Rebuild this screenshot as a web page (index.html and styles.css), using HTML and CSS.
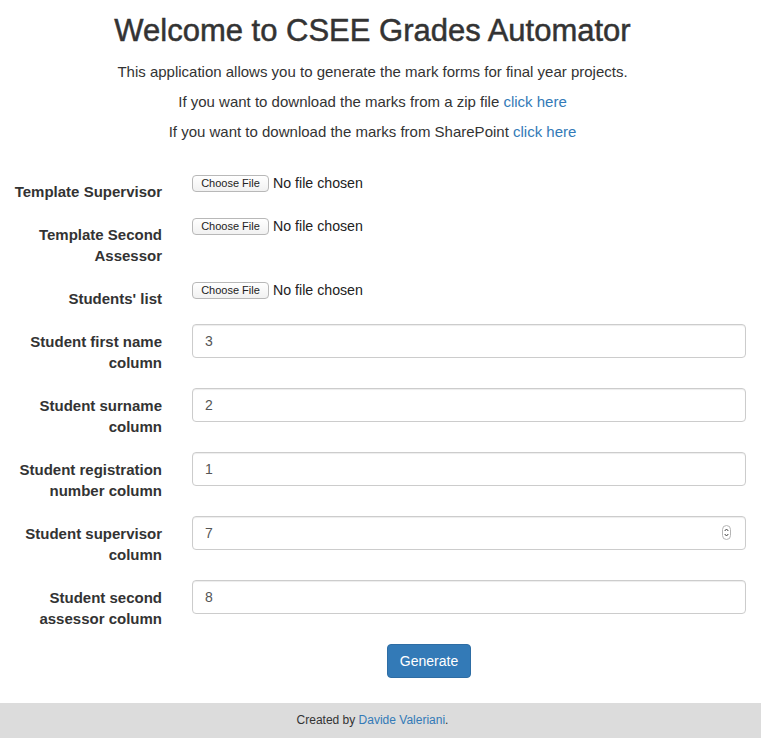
FILE: index.html
```html
<!DOCTYPE html>
<html lang="en">
<head>
<meta charset="utf-8">
<title>CSEE Grades Automator</title>
<link rel="stylesheet" href="styles.css">
</head>
<body>
<header class="intro">
  <h1 class="title">Welcome to CSEE Grades Automator</h1>
  <p class="lead">This application allows you to generate the mark forms for final year projects.</p>
  <p class="lead">If you want to download the marks from a zip file <a href="#">click here</a></p>
  <p class="lead">If you want to download the marks from SharePoint <a href="#">click here</a></p>
</header>
<form class="form">
  <div class="group">
    <label class="label">Template Supervisor</label>
    <div class="file"><button type="button" class="file-btn">Choose File</button><span class="file-text">No file chosen</span></div>
  </div>
  <div class="group">
    <label class="label">Template Second Assessor</label>
    <div class="file"><button type="button" class="file-btn">Choose File</button><span class="file-text">No file chosen</span></div>
  </div>
  <div class="group">
    <label class="label">Students' list</label>
    <div class="file"><button type="button" class="file-btn">Choose File</button><span class="file-text">No file chosen</span></div>
  </div>
  <div class="group">
    <label class="label">Student first name column</label>
    <input class="input" type="text" value="3">
  </div>
  <div class="group">
    <label class="label">Student surname column</label>
    <input class="input" type="text" value="2">
  </div>
  <div class="group">
    <label class="label">Student registration number column</label>
    <input class="input" type="text" value="1">
  </div>
  <div class="group">
    <label class="label">Student supervisor column</label>
    <div class="number">
      <input class="input" type="text" value="7">
      <svg class="spin" width="9" height="15" viewBox="0 0 9 15"><rect x="0.5" y="0.5" width="8" height="14" rx="4" fill="#fff" stroke="#b5b5b5"/><path d="M2.7 6 L4.5 4 L6.3 6" fill="none" stroke="#444" stroke-width="1"/><path d="M2.7 9 L4.5 11 L6.3 9" fill="none" stroke="#444" stroke-width="1"/></svg>
    </div>
  </div>
  <div class="group">
    <label class="label">Student second assessor column</label>
    <input class="input" type="text" value="8">
  </div>
  <div class="actions">
    <button type="button" class="btn">Generate</button>
  </div>
</form>
<footer class="footer">Created by <a href="#">Davide Valeriani</a>.</footer>
</body>
</html>
```
FILE: styles.css
```css
* { box-sizing: border-box; }
html, body { margin: 0; padding: 0; }
body {
  font-family: "Liberation Sans", Arial, Helvetica, sans-serif;
  font-size: 15px;
  line-height: 20px;
  color: #333;
  background: #fff;
}
a { color: #337ab7; text-decoration: none; }
.intro { text-align: center; padding-right: 16px; }
.title {
  font-size: 31px;
  line-height: 34px;
  font-weight: 500;
  margin: 14px 0 14px;
  color: #333;
  -webkit-text-stroke: 0.5px #333;
}
.lead { margin: 0 0 10px; }
.form { margin-top: 32px; padding: 0 15px 0 8px; }
.group {
  display: grid;
  grid-template-columns: 154px 1fr;
  column-gap: 30px;
  margin-bottom: 15px;
  align-items: start;
}
.label {
  font-weight: bold;
  text-align: right;
  padding-top: 7px;
  line-height: 21px;
}
.file { display: flex; align-items: center; height: 18px; }
.file-btn {
  font-family: "Liberation Sans", Arial, sans-serif;
  font-size: 11px;
  line-height: 13px;
  height: 17px;
  width: 77px;
  padding: 0;
  margin: 0 4px 0 0;
  background: linear-gradient(#fff, #f1f1f1);
  border: 1px solid #b8b8b8;
  border-radius: 4px;
  color: #222;
}
.file-text { font-size: 14.2px; color: #222; }
.input {
  display: block;
  width: 100%;
  height: 34px;
  padding: 6px 12px;
  font-family: "Liberation Sans", Arial, sans-serif;
  font-size: 14px;
  line-height: 20px;
  color: #555;
  background: #fff;
  border: 1px solid #ccc;
  border-radius: 4px;
  box-shadow: inset 0 1px 1px rgba(0,0,0,.075);
}
.number { position: relative; }
.spin { position: absolute; right: 15px; top: 9px; }
.actions {
  display: flex;
  justify-content: center;
  padding-left: 104px;
  margin-bottom: 25px;
}
.btn {
  font-family: "Liberation Sans", Arial, sans-serif;
  font-size: 14px;
  line-height: 20px;
  height: 34px;
  width: 84px;
  padding: 6px 0;
  color: #fff;
  background: #337ab7;
  border: 1px solid #2e6da4;
  border-radius: 4px;
}
.footer {
  background: #dcdcdc;
  text-align: center;
  font-size: 12px;
  line-height: 17px;
  padding: 9px 16px 9px 0;
  height: 36px;
}
```
